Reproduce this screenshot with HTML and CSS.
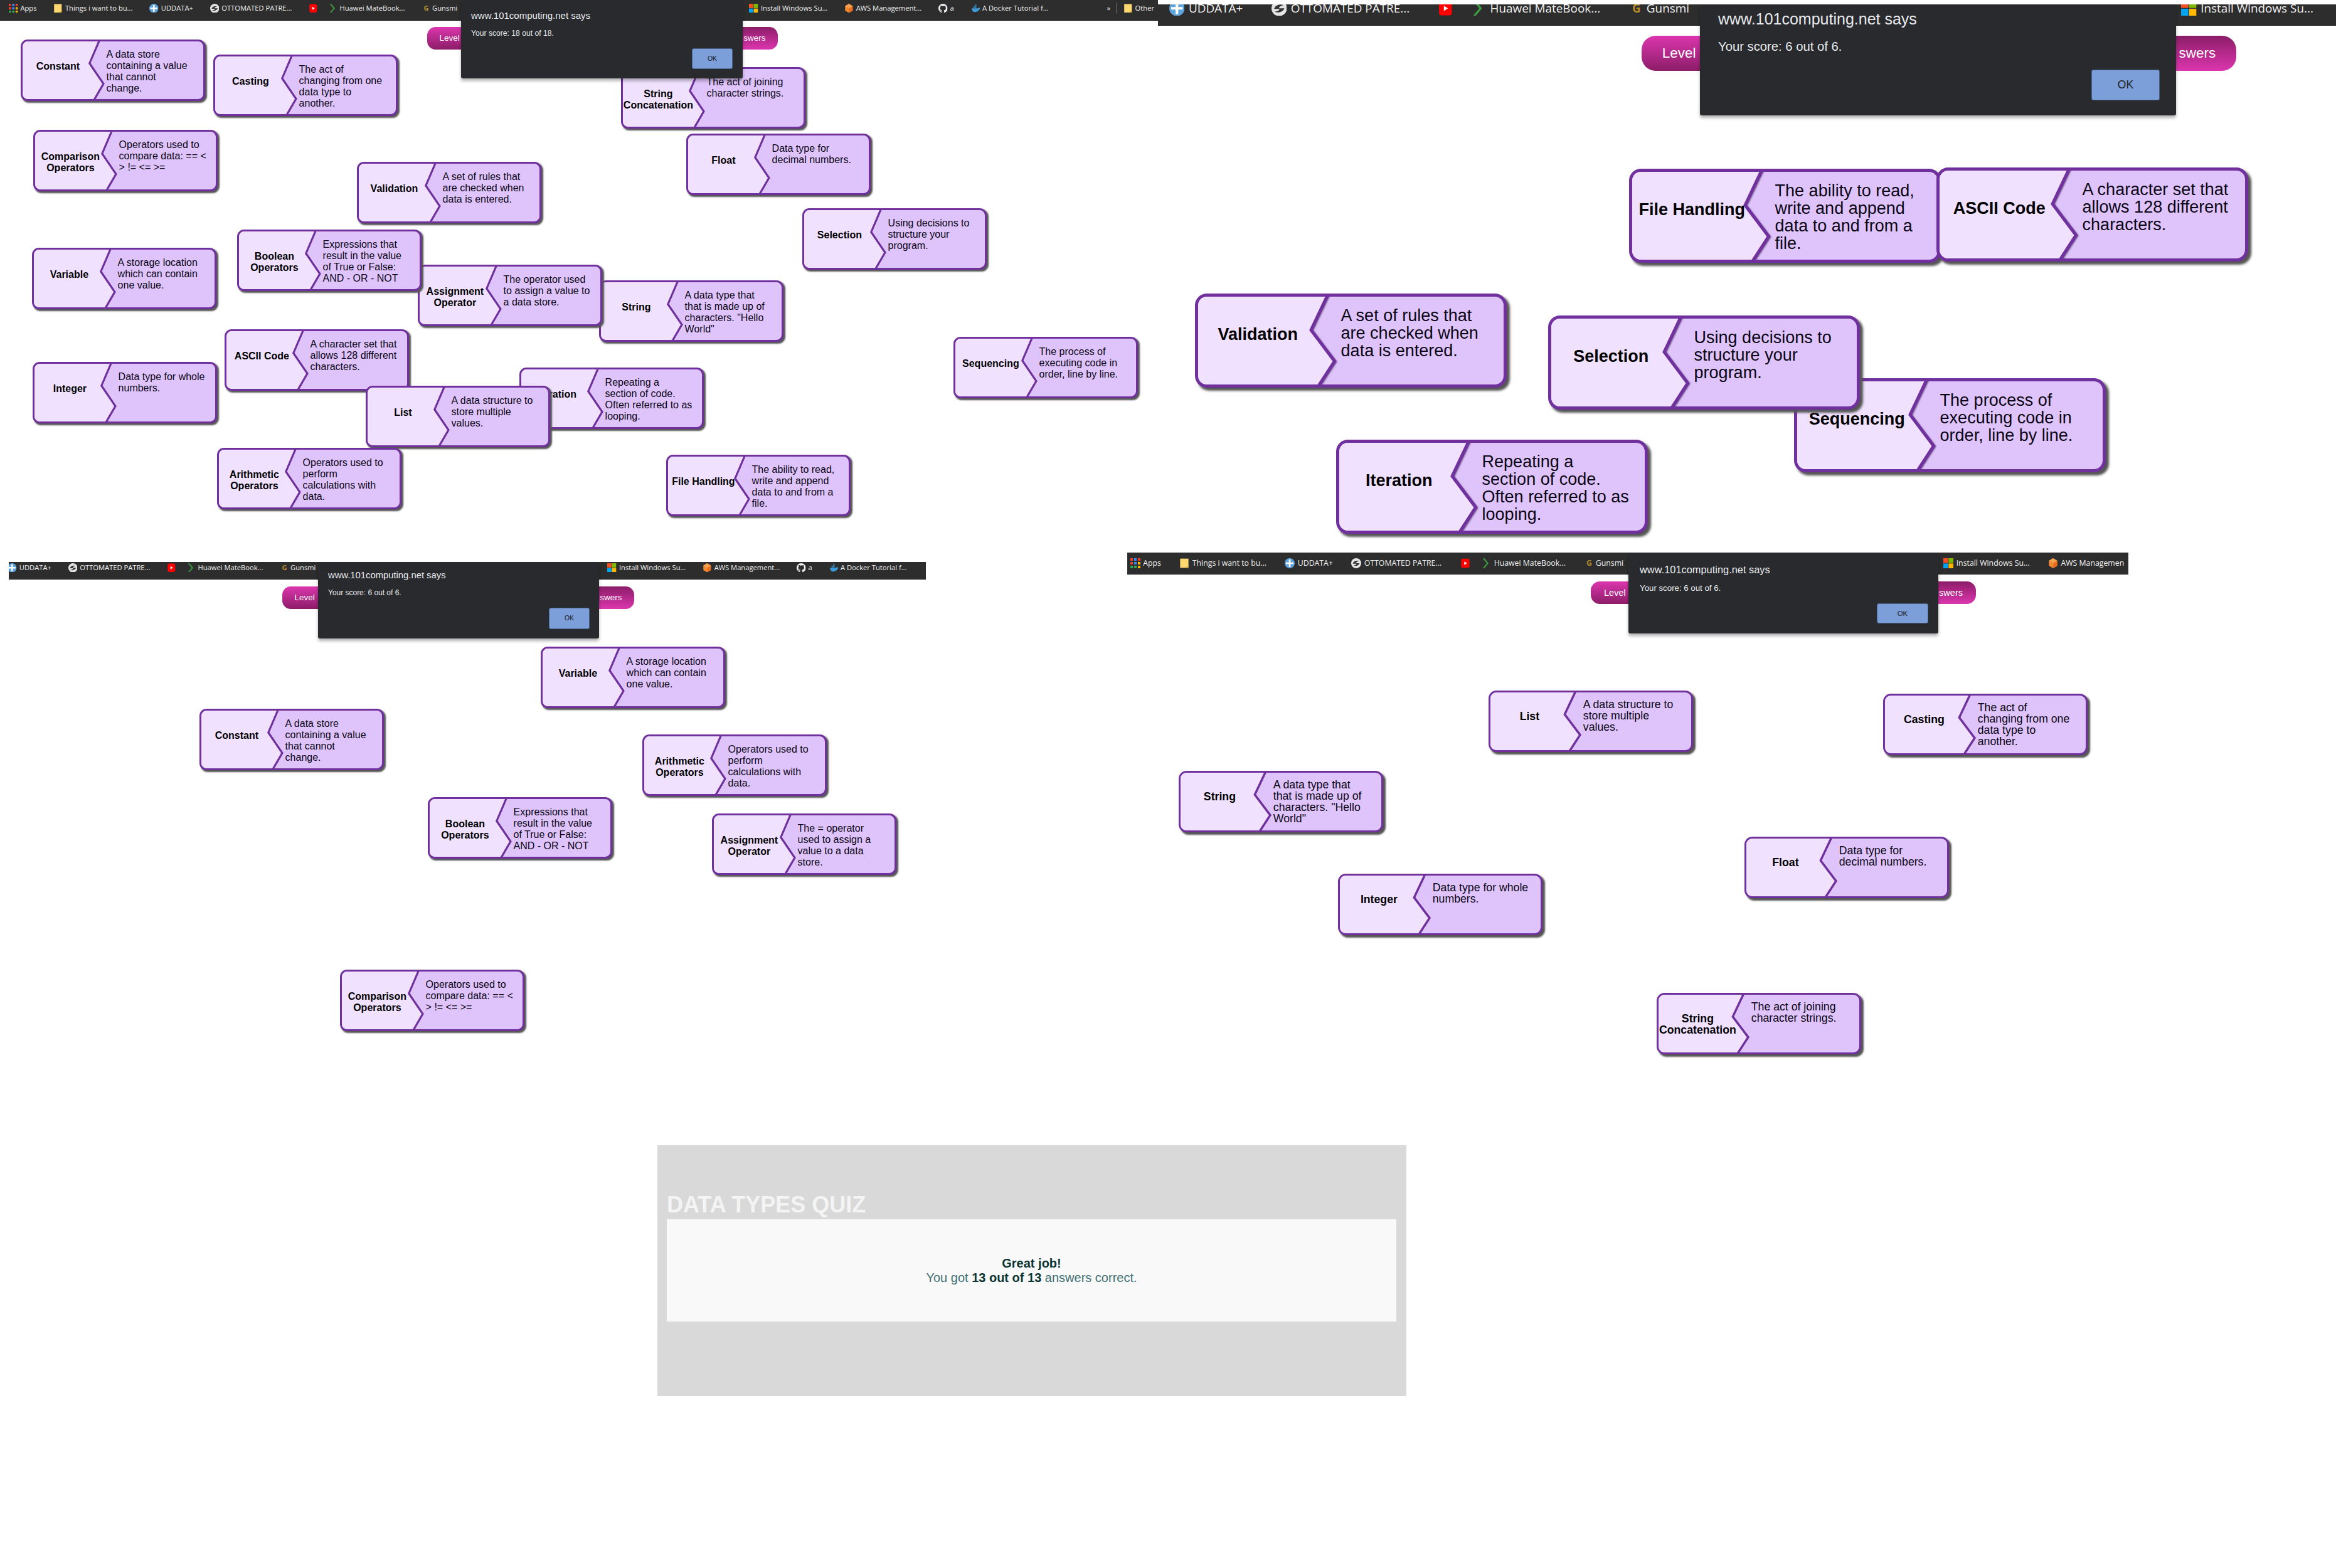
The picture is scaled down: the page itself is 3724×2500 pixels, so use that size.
FILE: index.html
```html
<!DOCTYPE html>
<html lang="en">
<head>
    <meta charset="UTF-8"/>
    <title>Data types quiz screenshots</title>
    <link rel="stylesheet" href="styles.css">
</head>
<body>
<svg class="sprite" width="0" height="0">
    <defs>
        <path id="jag" vector-effect="non-scaling-stroke" d="M-2 -3 H42.6 L37 38 L44.7 73.5 L39.2 103 H-2Z"/>
        <symbol id="i-apps" viewBox="0 0 12 12">
            <rect x="0" y="0" width="3" height="3" fill="#ea4335"/><rect x="4.5" y="0" width="3" height="3" fill="#4285f4"/><rect x="9" y="0" width="3" height="3" fill="#ea4335"/>
            <rect x="0" y="4.5" width="3" height="3" fill="#ea4335"/><rect x="4.5" y="4.5" width="3" height="3" fill="#4285f4"/><rect x="9" y="4.5" width="3" height="3" fill="#fbbc05"/>
            <rect x="0" y="9" width="3" height="3" fill="#34a853"/><rect x="4.5" y="9" width="3" height="3" fill="#34a853"/><rect x="9" y="9" width="3" height="3" fill="#fbbc05"/>
        </symbol>
        <symbol id="i-folder" viewBox="0 0 12 12">
            <path d="M1 0.5H11V11.5H1Z" fill="#fdd770"/><path d="M8 11.5L11 8.5V11.5Z" fill="#d9ac3c"/>
        </symbol>
        <symbol id="i-plus" viewBox="0 0 12 12">
            <circle cx="6" cy="6" r="6" fill="#5ea3dc"/><path d="M5 1.5H7V5H10.5V7H7V10.5H5V7H1.5V5H5Z" fill="#fff"/>
        </symbol>
        <symbol id="i-otto" viewBox="0 0 12 12">
            <circle cx="6" cy="6" r="6" fill="#e4e4e4"/><path d="M2 6.5C3 3 7 2.5 9.5 3.5 7 4 5.5 5 6 6H10C9 9 5 10 2.5 8.5 5 8.5 6.5 7.5 6 6.5Z" fill="#333"/>
        </symbol>
        <symbol id="i-yt" viewBox="0 0 12 12">
            <rect x="1" y="0.5" width="10" height="11" rx="2" fill="#f00"/><path d="M4.8 4L8 6L4.8 8Z" fill="#fff"/>
        </symbol>
        <symbol id="i-chev" viewBox="0 0 12 12">
            <path d="M3 0L8 6L3 12" fill="none" stroke="#3c9a3f" stroke-width="1.6"/>
        </symbol>
        <symbol id="i-win" viewBox="0 0 12 12">
            <rect width="5.7" height="5.7" fill="#f25022"/><rect x="6.3" width="5.7" height="5.7" fill="#7fba00"/>
            <rect y="6.3" width="5.7" height="5.7" fill="#00a4ef"/><rect x="6.3" y="6.3" width="5.7" height="5.7" fill="#ffb900"/>
        </symbol>
        <symbol id="i-aws" viewBox="0 0 12 12">
            <path d="M6 0L11 3V9L6 12L1 9V3Z" fill="#f08a32"/><path d="M6 6L11 3V9L6 12Z" fill="#e96f1f"/><path d="M6 0L11 3L6 6L1 3Z" fill="#f7a04e"/>
        </symbol>
        <symbol id="i-gh" viewBox="0 0 16 16">
            <path fill="#f1f1f1" d="M8 0C3.58 0 0 3.58 0 8c0 3.54 2.29 6.53 5.47 7.59.4.07.55-.17.55-.38 0-.19-.01-.82-.01-1.49-2.01.37-2.53-.49-2.69-.94-.09-.23-.48-.94-.82-1.13-.28-.15-.68-.52-.01-.53.63-.01 1.08.58 1.23.82.72 1.21 1.87.87 2.33.66.07-.52.28-.87.51-1.07-1.78-.2-3.64-.89-3.64-3.95 0-.87.31-1.59.82-2.15-.08-.2-.36-1.02.08-2.12 0 0 .67-.21 2.2.82.64-.18 1.32-.27 2-.27.68 0 1.36.09 2 .27 1.53-1.04 2.2-.82 2.2-.82.44 1.1.16 1.92.08 2.12.51.56.82 1.27.82 2.15 0 3.07-1.87 3.75-3.65 3.95.29.25.54.73.54 1.48 0 1.07-.01 1.93-.01 2.2 0 .21.15.46.55.38A8.013 8.013 0 0016 8c0-4.42-3.58-8-8-8z"/>
        </symbol>
        <symbol id="i-docker" viewBox="0 0 12 12">
            <path d="M1 6H9.5C10 5 11 5 12 5.5 11.5 8 9 11 5 11 2.5 11 1 9 1 6Z" fill="#3b9bd8"/>
            <rect x="3" y="3.6" width="1.8" height="1.8" fill="#3b9bd8"/><rect x="5.2" y="3.6" width="1.8" height="1.8" fill="#3b9bd8"/><rect x="5.2" y="1.2" width="1.8" height="1.8" fill="#3b9bd8"/>
        </symbol>
    </defs>
</svg>

<!-- first screenshot, 18 cards -->
<section class="shot p1">
    <div class="bar">
        <div class="bm">
            <div class="bm-left">
                <span class="item"><svg class="ic"><use href="#i-apps"/></svg>Apps</span>
                <span class="item"><svg class="ic"><use href="#i-folder"/></svg>Things i want to bu...</span>
                <span class="item"><svg class="ic"><use href="#i-plus"/></svg>UDDATA+</span>
                <span class="item"><svg class="ic"><use href="#i-otto"/></svg>OTTOMATED PATRE...</span>
                <span class="item item-yt"><svg class="ic"><use href="#i-yt"/></svg></span>
                <span class="item"><svg class="ic"><use href="#i-chev"/></svg>Huawei MateBook...</span>
                <span class="item"><b class="ic-g">G</b>Gunsmi</span>
            </div>
            <span class="item"><svg class="ic"><use href="#i-win"/></svg>Install Windows Su...</span>
            <span class="item"><svg class="ic"><use href="#i-aws"/></svg>AWS Management...</span>
            <span class="item"><svg class="ic"><use href="#i-gh"/></svg>a</span>
            <span class="item"><svg class="ic"><use href="#i-docker"/></svg>A Docker Tutorial f...</span>
            <span class="more">»</span>
            <span class="item"><svg class="ic"><use href="#i-folder"/></svg>Other</span>
        </div>
    </div>
    <div class="pills"><span class="pill-l">Level</span><span class="pill-r">swers</span></div>
    <div class="dialog">
        <div class="dlg-title">www.101computing.net says</div>
        <div class="dlg-text">Your score: 18 out of 18.</div>
        <div class="dlg-ok">OK</div>
    </div>

    <div class="card constant"><svg class="label" viewBox="0 0 100 100" preserveAspectRatio="none"><use href="#jag"/></svg><div class="term">Constant</div><div class="desc">A data store<br>containing a value<br>that cannot<br>change.</div></div>
    <div class="card casting"><svg class="label" viewBox="0 0 100 100" preserveAspectRatio="none"><use href="#jag"/></svg><div class="term">Casting</div><div class="desc">The act of<br>changing from one<br>data type to<br>another.</div></div>
    <div class="card concat"><svg class="label" viewBox="0 0 100 100" preserveAspectRatio="none"><use href="#jag"/></svg><div class="term">String<br>Concatenation</div><div class="desc">The act of joining<br>character strings.</div></div>
    <div class="card comparison"><svg class="label" viewBox="0 0 100 100" preserveAspectRatio="none"><use href="#jag"/></svg><div class="term">Comparison<br>Operators</div><div class="desc">Operators used to<br>compare data: == &lt;<br>&gt; != &lt;= &gt;=</div></div>
    <div class="card float"><svg class="label" viewBox="0 0 100 100" preserveAspectRatio="none"><use href="#jag"/></svg><div class="term">Float</div><div class="desc">Data type for<br>decimal numbers.</div></div>
    <div class="card validation"><svg class="label" viewBox="0 0 100 100" preserveAspectRatio="none"><use href="#jag"/></svg><div class="term">Validation</div><div class="desc">A set of rules that<br>are checked when<br>data is entered.</div></div>
    <div class="card selection"><svg class="label" viewBox="0 0 100 100" preserveAspectRatio="none"><use href="#jag"/></svg><div class="term">Selection</div><div class="desc">Using decisions to<br>structure your<br>program.</div></div>
    <div class="card string"><svg class="label" viewBox="0 0 100 100" preserveAspectRatio="none"><use href="#jag"/></svg><div class="term">String</div><div class="desc">A data type that<br>that is made up of<br>characters. "Hello<br>World"</div></div>
    <div class="card assignment"><svg class="label" viewBox="0 0 100 100" preserveAspectRatio="none"><use href="#jag"/></svg><div class="term">Assignment<br>Operator</div><div class="desc">The operator used<br>to assign a value to<br>a data store.</div></div>
    <div class="card boolean"><svg class="label" viewBox="0 0 100 100" preserveAspectRatio="none"><use href="#jag"/></svg><div class="term">Boolean<br>Operators</div><div class="desc">Expressions that<br>result in the value<br>of True or False:<br>AND - OR - NOT</div></div>
    <div class="card variable"><svg class="label" viewBox="0 0 100 100" preserveAspectRatio="none"><use href="#jag"/></svg><div class="term">Variable</div><div class="desc">A storage location<br>which can contain<br>one value.</div></div>
    <div class="card sequencing"><svg class="label" viewBox="0 0 100 100" preserveAspectRatio="none"><use href="#jag"/></svg><div class="term">Sequencing</div><div class="desc">The process of<br>executing code in<br>order, line by line.</div></div>
    <div class="card integer"><svg class="label" viewBox="0 0 100 100" preserveAspectRatio="none"><use href="#jag"/></svg><div class="term">Integer</div><div class="desc">Data type for whole<br>numbers.</div></div>
    <div class="card iteration"><svg class="label" viewBox="0 0 100 100" preserveAspectRatio="none"><use href="#jag"/></svg><div class="term">Iteration</div><div class="desc">Repeating a<br>section of code.<br>Often referred to as<br>looping.</div></div>
    <div class="card ascii"><svg class="label" viewBox="0 0 100 100" preserveAspectRatio="none"><use href="#jag"/></svg><div class="term">ASCII Code</div><div class="desc">A character set that<br>allows 128 different<br>characters.</div></div>
    <div class="card list"><svg class="label" viewBox="0 0 100 100" preserveAspectRatio="none"><use href="#jag"/></svg><div class="term">List</div><div class="desc">A data structure to<br>store multiple<br>values.</div></div>
    <div class="card arithmetic"><svg class="label" viewBox="0 0 100 100" preserveAspectRatio="none"><use href="#jag"/></svg><div class="term">Arithmetic<br>Operators</div><div class="desc">Operators used to<br>perform<br>calculations with<br>data.</div></div>
    <div class="card filehandling"><svg class="label" viewBox="0 0 100 100" preserveAspectRatio="none"><use href="#jag"/></svg><div class="term">File Handling</div><div class="desc">The ability to read,<br>write and append<br>data to and from a<br>file.</div></div>
</section>

<!-- second screenshot, big zoom -->
<section class="shot p2">
    <div class="bar">
        <div class="bm">
            <div class="bm-left">
                <span class="item"><svg class="ic"><use href="#i-apps"/></svg>Apps</span>
                <span class="item"><svg class="ic"><use href="#i-folder"/></svg>Things i want to bu...</span>
                <span class="item"><svg class="ic"><use href="#i-plus"/></svg>UDDATA+</span>
                <span class="item"><svg class="ic"><use href="#i-otto"/></svg>OTTOMATED PATRE...</span>
                <span class="item item-yt"><svg class="ic"><use href="#i-yt"/></svg></span>
                <span class="item"><svg class="ic"><use href="#i-chev"/></svg>Huawei MateBook...</span>
                <span class="item"><b class="ic-g">G</b>Gunsmi</span>
            </div>
            <span class="item"><svg class="ic"><use href="#i-win"/></svg>Install Windows Su...</span>
        </div>
    </div>
    <div class="pills"><span class="pill-l">Level</span><span class="pill-r">swers</span></div>
    <div class="dialog">
        <div class="dlg-title">www.101computing.net says</div>
        <div class="dlg-text">Your score: 6 out of 6.</div>
        <div class="dlg-ok">OK</div>
    </div>

    <div class="card filehandling"><svg class="label" viewBox="0 0 100 100" preserveAspectRatio="none"><use href="#jag"/></svg><div class="term">File Handling</div><div class="desc">The ability to read,<br>write and append<br>data to and from a<br>file.</div></div>
    <div class="card ascii"><svg class="label" viewBox="0 0 100 100" preserveAspectRatio="none"><use href="#jag"/></svg><div class="term">ASCII Code</div><div class="desc">A character set that<br>allows 128 different<br>characters.</div></div>
    <div class="card validation"><svg class="label" viewBox="0 0 100 100" preserveAspectRatio="none"><use href="#jag"/></svg><div class="term">Validation</div><div class="desc">A set of rules that<br>are checked when<br>data is entered.</div></div>
    <div class="card sequencing"><svg class="label" viewBox="0 0 100 100" preserveAspectRatio="none"><use href="#jag"/></svg><div class="term">Sequencing</div><div class="desc">The process of<br>executing code in<br>order, line by line.</div></div>
    <div class="card selection"><svg class="label" viewBox="0 0 100 100" preserveAspectRatio="none"><use href="#jag"/></svg><div class="term">Selection</div><div class="desc">Using decisions to<br>structure your<br>program.</div></div>
    <div class="card iteration"><svg class="label" viewBox="0 0 100 100" preserveAspectRatio="none"><use href="#jag"/></svg><div class="term">Iteration</div><div class="desc">Repeating a<br>section of code.<br>Often referred to as<br>looping.</div></div>
</section>

<!-- third screenshot -->
<section class="shot p3">
    <div class="bar">
        <div class="bm">
            <div class="bm-left">
                <span class="item"><svg class="ic"><use href="#i-apps"/></svg>Apps</span>
                <span class="item"><svg class="ic"><use href="#i-folder"/></svg>Things i want to bu...</span>
                <span class="item"><svg class="ic"><use href="#i-plus"/></svg>UDDATA+</span>
                <span class="item"><svg class="ic"><use href="#i-otto"/></svg>OTTOMATED PATRE...</span>
                <span class="item item-yt"><svg class="ic"><use href="#i-yt"/></svg></span>
                <span class="item"><svg class="ic"><use href="#i-chev"/></svg>Huawei MateBook...</span>
                <span class="item"><b class="ic-g">G</b>Gunsmi</span>
            </div>
            <span class="item"><svg class="ic"><use href="#i-win"/></svg>Install Windows Su...</span>
            <span class="item"><svg class="ic"><use href="#i-aws"/></svg>AWS Management...</span>
            <span class="item"><svg class="ic"><use href="#i-gh"/></svg>a</span>
            <span class="item"><svg class="ic"><use href="#i-docker"/></svg>A Docker Tutorial f...</span>
        </div>
    </div>
    <div class="pills"><span class="pill-l">Level</span><span class="pill-r">swers</span></div>
    <div class="dialog">
        <div class="dlg-title">www.101computing.net says</div>
        <div class="dlg-text">Your score: 6 out of 6.</div>
        <div class="dlg-ok">OK</div>
    </div>

    <div class="card variable"><svg class="label" viewBox="0 0 100 100" preserveAspectRatio="none"><use href="#jag"/></svg><div class="term">Variable</div><div class="desc">A storage location<br>which can contain<br>one value.</div></div>
    <div class="card constant"><svg class="label" viewBox="0 0 100 100" preserveAspectRatio="none"><use href="#jag"/></svg><div class="term">Constant</div><div class="desc">A data store<br>containing a value<br>that cannot<br>change.</div></div>
    <div class="card arithmetic"><svg class="label" viewBox="0 0 100 100" preserveAspectRatio="none"><use href="#jag"/></svg><div class="term">Arithmetic<br>Operators</div><div class="desc">Operators used to<br>perform<br>calculations with<br>data.</div></div>
    <div class="card boolean"><svg class="label" viewBox="0 0 100 100" preserveAspectRatio="none"><use href="#jag"/></svg><div class="term">Boolean<br>Operators</div><div class="desc">Expressions that<br>result in the value<br>of True or False:<br>AND - OR - NOT</div></div>
    <div class="card assignment"><svg class="label" viewBox="0 0 100 100" preserveAspectRatio="none"><use href="#jag"/></svg><div class="term">Assignment<br>Operator</div><div class="desc">The = operator<br>used to assign a<br>value to a data<br>store.</div></div>
    <div class="card comparison"><svg class="label" viewBox="0 0 100 100" preserveAspectRatio="none"><use href="#jag"/></svg><div class="term">Comparison<br>Operators</div><div class="desc">Operators used to<br>compare data: == &lt;<br>&gt; != &lt;= &gt;=</div></div>
</section>

<!-- fourth screenshot -->
<section class="shot p4">
    <div class="bar">
        <div class="bm">
            <div class="bm-left">
                <span class="item"><svg class="ic"><use href="#i-apps"/></svg>Apps</span>
                <span class="item"><svg class="ic"><use href="#i-folder"/></svg>Things i want to bu...</span>
                <span class="item"><svg class="ic"><use href="#i-plus"/></svg>UDDATA+</span>
                <span class="item"><svg class="ic"><use href="#i-otto"/></svg>OTTOMATED PATRE...</span>
                <span class="item item-yt"><svg class="ic"><use href="#i-yt"/></svg></span>
                <span class="item"><svg class="ic"><use href="#i-chev"/></svg>Huawei MateBook...</span>
                <span class="item"><b class="ic-g">G</b>Gunsmi</span>
            </div>
            <span class="item"><svg class="ic"><use href="#i-win"/></svg>Install Windows Su...</span>
            <span class="item"><svg class="ic"><use href="#i-aws"/></svg>AWS Managemen</span>
        </div>
    </div>
    <div class="pills"><span class="pill-l">Level</span><span class="pill-r">swers</span></div>
    <div class="dialog">
        <div class="dlg-title">www.101computing.net says</div>
        <div class="dlg-text">Your score: 6 out of 6.</div>
        <div class="dlg-ok">OK</div>
    </div>

    <div class="card list"><svg class="label" viewBox="0 0 100 100" preserveAspectRatio="none"><use href="#jag"/></svg><div class="term">List</div><div class="desc">A data structure to<br>store multiple<br>values.</div></div>
    <div class="card casting"><svg class="label" viewBox="0 0 100 100" preserveAspectRatio="none"><use href="#jag"/></svg><div class="term">Casting</div><div class="desc">The act of<br>changing from one<br>data type to<br>another.</div></div>
    <div class="card string"><svg class="label" viewBox="0 0 100 100" preserveAspectRatio="none"><use href="#jag"/></svg><div class="term">String</div><div class="desc">A data type that<br>that is made up of<br>characters. "Hello<br>World"</div></div>
    <div class="card integer"><svg class="label" viewBox="0 0 100 100" preserveAspectRatio="none"><use href="#jag"/></svg><div class="term">Integer</div><div class="desc">Data type for whole<br>numbers.</div></div>
    <div class="card float"><svg class="label" viewBox="0 0 100 100" preserveAspectRatio="none"><use href="#jag"/></svg><div class="term">Float</div><div class="desc">Data type for<br>decimal numbers.</div></div>
    <div class="card concat"><svg class="label" viewBox="0 0 100 100" preserveAspectRatio="none"><use href="#jag"/></svg><div class="term">String<br>Concatenation</div><div class="desc">The act of joining<br>character strings.</div></div>
</section>

<section class="quiz">
    <h1 class="quiz-title">DATA TYPES QUIZ</h1>
    <div class="quiz-box">
        <p class="quiz-msg"><b>Great job!</b><br>You got <b>13 out of 13</b> answers correct.</p>
    </div>
</section>
</body>
</html>
```

FILE: styles.css
```css
html, body { margin: 0; padding: 0; background: #fff; }
body { position: relative; width: 3724px; height: 2500px; overflow: hidden; font-family: "Liberation Sans", Arial, sans-serif; }
.sprite { position: absolute; }

/* each screenshot sits on the sheet like a window */
.shot { position: absolute; }
.p1 { left: 0; top: 0; width: 1846px; height: 880px; font-size: 16px; --card-h: 98px; --lh: 18px; }
.p2 { left: 1846px; top: 7px; width: 1878px; height: 860px; font-size: 27px; --card-h: 150px; --lh: 28px; }
.p3 { left: 14px; top: 896px; width: 1462px; height: 800px; font-size: 16px; --card-h: 98px; --lh: 18px; }
.p4 { left: 1797px; top: 881px; width: 1596px; height: 820px; font-size: 17.7px; --card-h: 98px; --lh: 18px; }

/* bookmarks bar */
.bar { position: relative; height: var(--bar-h); background: #2d2d2d; border-bottom: 1px solid #161616; box-sizing: border-box; overflow: hidden; color: #f2f2f2; font-family: "Open Sans", "Liberation Sans", sans-serif; font-size: var(--bar-fs); }
.p1 { --bar-h: 33px; --bar-fs: 11.2px; --bm-x: 14px; --bm-y: 4px; }
.p2 { --bar-h: 34px; --bar-fs: 18.9px; --bm-x: -361px; --bm-y: -9px; }
.p3 { --bar-h: 28px; --bar-fs: 11.2px; --bm-x: -226px; --bm-y: 0px; }
.p4 { --bar-h: 35px; --bar-fs: 12.3px; --bm-x: 5px; --bm-y: 7px; }
.bm { display: flex; align-items: center; height: 1.6em; margin: var(--bm-y) 0 0 var(--bm-x); white-space: nowrap; }
.bm-left { flex: none; display: flex; align-items: center; width: 105.4em; overflow: hidden; }
.item { flex: none; display: inline-flex; align-items: center; margin-right: 2.4em; }
.item-yt { margin-right: 1.1em; }
.ic { width: 1.3em; height: 1.3em; margin-right: .35em; flex: none; }
.ic-g { width: 1.3em; margin-right: .2em; text-align: center; color: #b58b2a; }
.more { margin: 0 1em 0 5.9em; padding-right: .8em; border-right: 1px solid #666; line-height: 1.6em; }

/* Level / Answers buttons behind the alert */
.pills { position: absolute; display: flex; color: #fff; font-size: var(--pill-fs); left: var(--pill-x); top: var(--pill-y); width: var(--pill-w); height: var(--pill-h); line-height: var(--pill-h); }
.p1 { --pill-x: 681px; --pill-y: 43px; --pill-w: 559px; --pill-h: 36px; --pill-fs: 13.5px; }
.p2 { --pill-x: 771px; --pill-y: 50px; --pill-w: 948px; --pill-h: 56px; --pill-fs: 22.5px; }
.p3 { --pill-x: 436px; --pill-y: 39px; --pill-w: 561px; --pill-h: 36px; --pill-fs: 13.5px; }
.p4 { --pill-x: 739px; --pill-y: 46px; --pill-w: 614px; --pill-h: 36px; --pill-fs: 14.5px; }
.pill-l, .pill-r { flex: 1; padding: 0 1.45em; }
.pill-l { background: linear-gradient(#dc36ae, #8c1d68); border-radius: 1em 0 0 1em; }
.pill-r { background: linear-gradient(#8c1d68, #dc36ae); border-radius: 0 1em 1em 0; text-align: right; }

/* browser alert */
.dialog { position: absolute; top: 0; z-index: 50; display: flex; flex-direction: column; box-sizing: border-box; left: var(--dlg-x); width: var(--dlg-w); height: var(--dlg-h); padding: var(--dlg-pt) var(--dlg-pr) var(--dlg-pb) var(--dlg-pl); background: #292a2d; color: #e8eaed; font-size: var(--dlg-fs); border-radius: 0 0 3px 3px; box-shadow: 0 4px 5px rgba(0,0,0,.3); }
.p1 { --dlg-x: 735px; --dlg-w: 449px; --dlg-h: 125px; --dlg-pt: 15px; --dlg-pr: 16px; --dlg-pb: 15px; --dlg-pl: 16px; --dlg-fs: 15px; --dlg-gap: 11px; --ok-w: 65px; --ok-h: 33px; }
.p2 { --dlg-x: 864px; --dlg-w: 759px; --dlg-h: 177px; --dlg-pt: 7px; --dlg-pr: 26px; --dlg-pb: 24px; --dlg-pl: 29px; --dlg-fs: 25px; --dlg-gap: 14px; --ok-w: 109px; --ok-h: 49px; }
.p3 { --dlg-x: 493px; --dlg-w: 448px; --dlg-h: 122px; --dlg-pt: 12px; --dlg-pr: 15px; --dlg-pb: 15px; --dlg-pl: 16px; --dlg-fs: 14.8px; --dlg-gap: 11px; --ok-w: 65px; --ok-h: 34px; }
.p4 { --dlg-x: 799px; --dlg-w: 494px; --dlg-h: 129px; --dlg-pt: 17px; --dlg-pr: 16px; --dlg-pb: 16px; --dlg-pl: 18px; --dlg-fs: 16.4px; --dlg-gap: 10px; --ok-w: 82px; --ok-h: 32px; }
.dlg-title { line-height: 1.3em; }
.dlg-text { margin-top: var(--dlg-gap); font-size: .81em; line-height: 1.3em; }
.dlg-ok { margin-top: auto; align-self: flex-end; box-sizing: border-box; width: var(--ok-w); height: var(--ok-h); line-height: calc(var(--ok-h) - 2px); text-align: center; background: #7c9fd9; border: 1px solid #4a6590; border-radius: 3px; color: #202124; font-size: .7em; }

/* term cards */
.card { position: absolute; display: flex; box-sizing: border-box; width: 18.4em; height: var(--card-h); line-height: var(--lh); color: #0a0614; background: #dfc3fb; border: .19em solid #70309e; border-radius: .7em; box-shadow: .18em .18em .14em #555; overflow: hidden; white-space: nowrap; }
.label { position: absolute; left: 0; top: 0; width: 100%; height: 100%; fill: #f0e2fe; stroke: #70309e; stroke-width: .19em; overflow: visible; filter: drop-shadow(.05em .04em .04em rgba(20,0,40,.55)); }
.term { position: relative; flex: none; box-sizing: border-box; width: 7.05em; padding-top: 1.95em; text-align: center; font-weight: bold; color: #000; }
.desc { position: relative; margin-left: 1.3em; padding-top: .78em; }
.p2 .term { padding-top: 1.7em; }
.p2 .desc { margin-left: 1.38em; padding-top: .6em; }
.p4 .term { padding-top: 1.65em; }
.p4 .desc { padding-top: .58em; }

/* card places, first screenshot */
.p1 .constant { left: 33px; top: 63px; }
.p1 .casting { left: 340px; top: 87px; }
.p1 .concat { left: 990px; top: 107px; }
.p1 .comparison { left: 53px; top: 207px; }
.p1 .float { left: 1094px; top: 213px; }
.p1 .validation { left: 569px; top: 258px; }
.p1 .selection { left: 1279px; top: 332px; }
.p1 .string { left: 955px; top: 447px; }
.p1 .assignment { left: 666px; top: 422px; }
.p1 .boolean { left: 378px; top: 366px; }
.p1 .variable { left: 51px; top: 395px; }
.p1 .sequencing { left: 1520px; top: 537px; }
.p1 .integer { left: 52px; top: 577px; }
.p1 .iteration { left: 828px; top: 586px; }
.p1 .ascii { left: 358px; top: 525px; }
.p1 .list { left: 583px; top: 615px; }
.p1 .arithmetic { left: 346px; top: 714px; }
.p1 .filehandling { left: 1062px; top: 725px; }

/* second screenshot */
.p2 .filehandling { left: 751px; top: 262px; }
.p2 .ascii { left: 1241px; top: 260px; }
.p2 .validation { left: 59px; top: 461px; }
.p2 .selection { left: 622px; top: 496px; }
.p2 .sequencing { left: 1014px; top: 596px; }
.p2 .iteration { left: 284px; top: 694px; }

/* third screenshot */
.p3 .variable { left: 848px; top: 135px; }
.p3 .constant { left: 304px; top: 234px; }
.p3 .arithmetic { left: 1010px; top: 275px; }
.p3 .boolean { left: 668px; top: 375px; }
.p3 .assignment { left: 1121px; top: 401px; }
.p3 .comparison { left: 528px; top: 650px; }

/* fourth screenshot */
.p4 .list { left: 576px; top: 220px; }
.p4 .casting { left: 1205px; top: 225px; }
.p4 .string { left: 82px; top: 348px; }
.p4 .integer { left: 336px; top: 512px; }
.p4 .float { left: 984px; top: 453px; }
.p4 .concat { left: 844px; top: 702px; }

/* result box */
.quiz { position: absolute; left: 1048px; top: 1826px; width: 1194px; height: 400px; box-sizing: border-box; padding: 75px 16px 0 15px; background: #d9d9d9; }
.quiz-title { margin: 0 0 3px; height: 40px; line-height: 40px; font-size: 36px; font-weight: bold; color: #f4f4f4; }
.quiz-box { display: flex; align-items: center; justify-content: center; height: 163px; background: #f9f9f9; }
.quiz-msg { margin: 0; font-size: 20px; line-height: 23px; text-align: center; color: #3f6f72; }
.quiz-msg b { color: #0b3433; }
```
